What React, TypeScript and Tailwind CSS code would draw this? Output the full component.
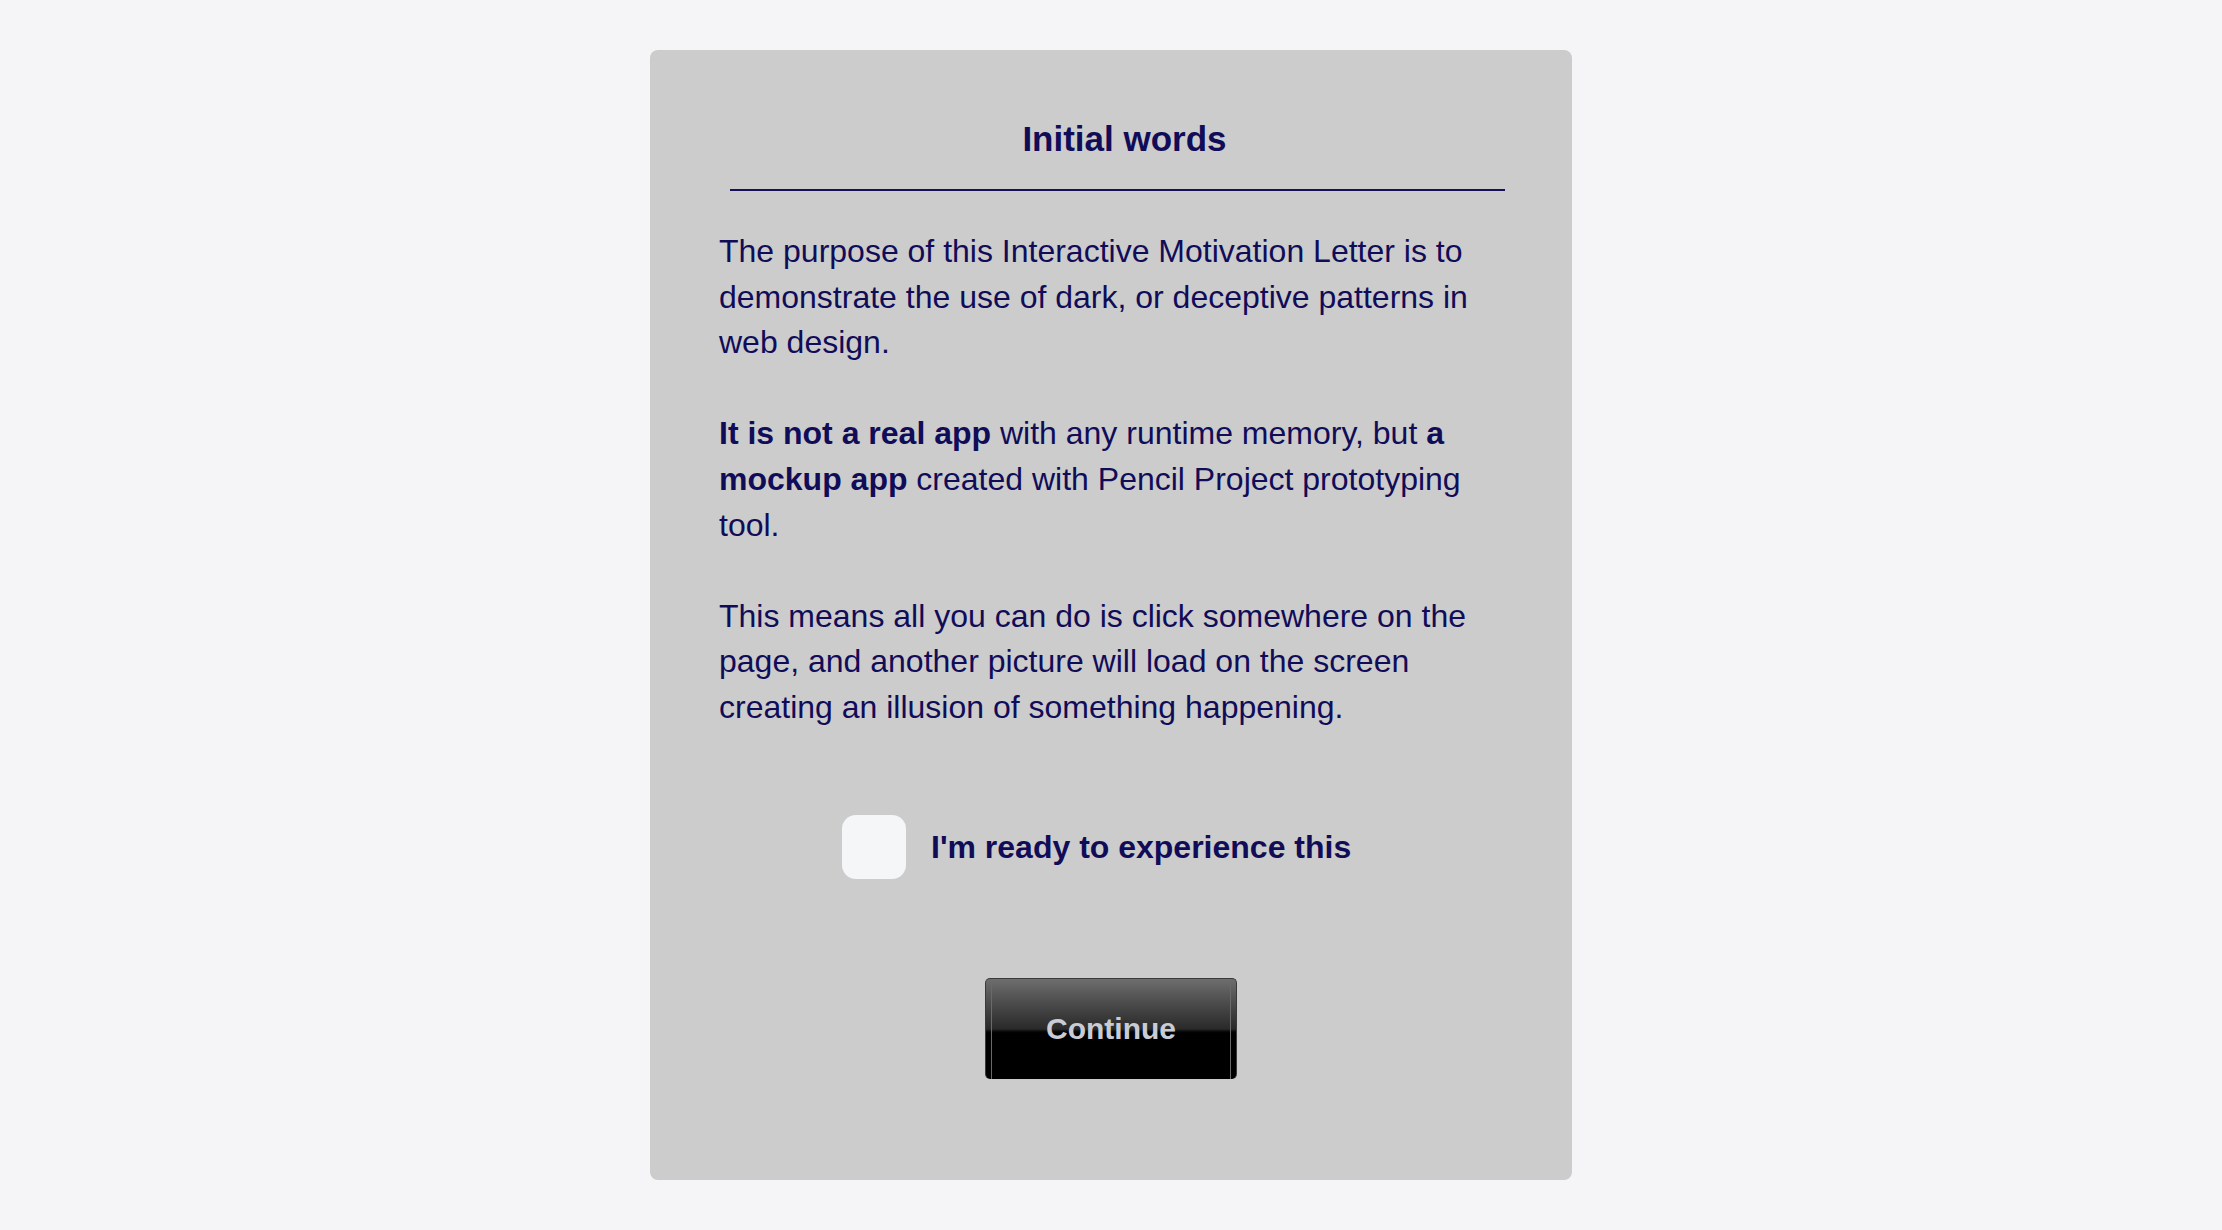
import { useState } from 'react'

const textColor = 'text-[#110c58]'

const App = () => {
  const [ready, setReady] = useState(false)

  return (
    <div className="min-h-screen w-full bg-[#f5f5f7] pt-[50px] pb-[50px] font-['Liberation_Sans',Arial,sans-serif]">
      <div className="mx-auto flex h-[1130px] w-[922px] flex-col rounded-lg bg-[#cccccc]">
        {/* Header */}
        <h1 className={`mt-[69px] pl-[27px] text-center text-[35px] font-bold leading-[40px] ${textColor}`}>
          Initial words
        </h1>
        <div className="ml-[80px] mr-[67px] mt-[30px] h-[2px] bg-[#15105a]" />

        {/* Body text */}
        <div className={`mt-[38px] px-[69px] text-[32px] leading-[45.6px] ${textColor}`}>
          <p>
            The purpose of this Interactive Motivation Letter is to demonstrate the use of dark, or
            deceptive patterns in web design.
          </p>
          <p className="mt-[45.6px]">
            <span className="font-bold">It is not a real app</span> with any runtime memory, but{' '}
            <span className="font-bold">a mockup app</span> created with Pencil Project prototyping
            tool.
          </p>
          <p className="mt-[45.6px]">
            This means all you can do is click somewhere on the page, and another picture will load
            on the screen creating an illusion of something happening.
          </p>
        </div>

        {/* Checkbox */}
        <label className="mt-[84px] flex cursor-pointer items-center gap-[25px] pl-[192px]">
          <button
            type="button"
            onClick={() => setReady(!ready)}
            className="flex h-[64px] w-[64px] items-center justify-center rounded-[14px] bg-[#f5f6f8]"
          >
            {ready && (
              <svg width="40" height="40" viewBox="0 0 24 24" fill="none" stroke="#110c58" strokeWidth="3">
                <path d="M5 12l5 5 9-10" />
              </svg>
            )}
          </button>
          <span className={`text-[32px] font-bold leading-[40px] ${textColor}`}>
            I'm ready to experience this
          </span>
        </label>

        {/* Continue */}
        <button
          type="button"
          className="mx-auto mt-[99px] flex h-[101px] w-[252px] items-center justify-center rounded-[5px] border-x border-t border-[#3a3a3a] bg-gradient-to-b from-[#6e6e6e] via-[#2a2a2a] via-50% to-black to-55%"
        >
          <div className="mx-[5px] flex h-full w-full items-center justify-center border-x border-[#6a6a6a]">
            <span className="text-[30px] font-bold text-[#c9ccd4]">Continue</span>
          </div>
        </button>
      </div>
    </div>
  )
}

export default App
